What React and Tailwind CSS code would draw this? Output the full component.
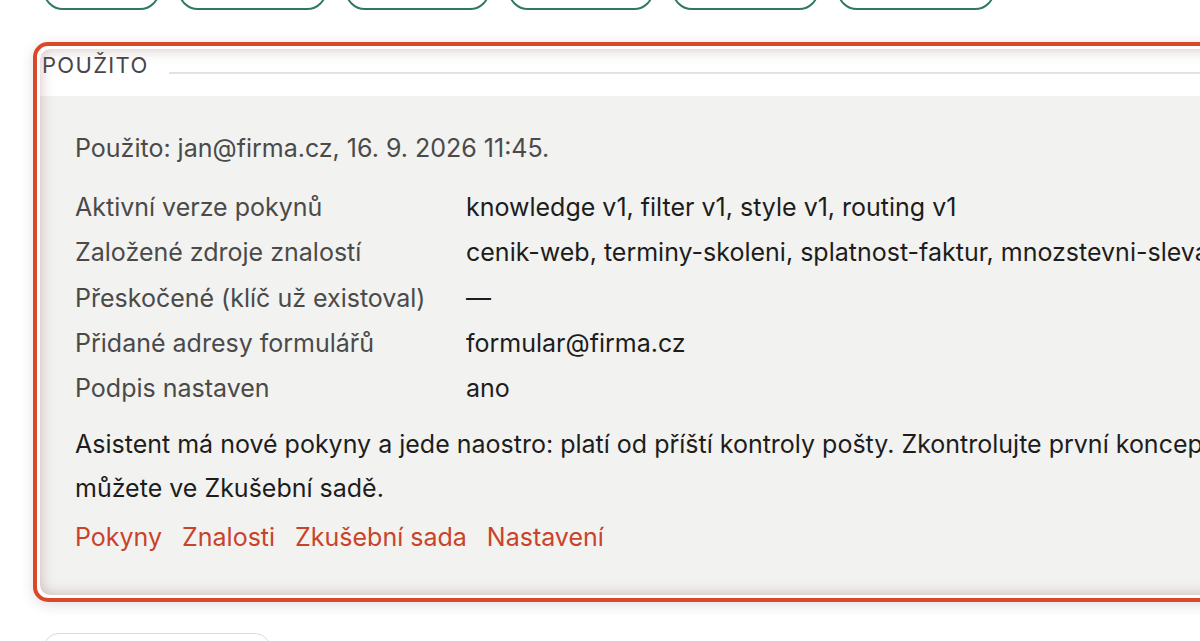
import React from "react"

const pills = [117, 149, 145, 146, 147, 158]

const rows = [
  ["Aktivní verze pokynů", "knowledge v1, filter v1, style v1, routing v1"],
  ["Založené zdroje znalostí", "cenik-web, terminy-skoleni, splatnost-faktur, mnozstevni-sleva"],
  ["Přeskočené (klíč už existoval)", "—"],
  ["Přidané adresy formulářů", "formular@firma.cz"],
  ["Podpis nastaven", "ano"],
]

const links = ["Pokyny", "Znalosti", "Zkušební sada", "Nastavení"]

export default function App() {
  return (
    <div className="w-[1200px] h-[641px] overflow-hidden bg-white font-['Inter','Noto_Sans',sans-serif]">
      {/* top tabs, cut off by the viewport */}
      <div className="flex gap-[18px] pl-[43px] -mt-[30px]">
        {pills.map((w, i) => (
          <div
            key={i}
            style={{ width: w }}
            className="h-[40px] rounded-full border-2 border-[#2f7a5c]"
          />
        ))}
      </div>

      <div className="mt-[32px] ml-[33px] w-[1240px] rounded-[15px] border-4 border-[#d9482b] p-[3px] bg-white shadow-[0_3px_14px_rgba(0,0,0,0.13)]">
        <div className="relative rounded-[10px] overflow-hidden bg-white">
          <div className="h-[47px] flex items-start pt-[3px]">
            <div className="pl-[2px] text-[22px] leading-[26px] tracking-[0.06em] text-[#48444c]">
              POUŽITO
            </div>
            <div className="flex-1 h-[2px] bg-[#e2e2e2] mt-[20px] ml-[20px]" />
          </div>

          <div className="bg-[#f2f2f0] pl-[35px] pt-[36px] pb-[42px] text-[25px]">
            <p className="leading-[32px] text-[#4a4a4a]">Použito: jan@firma.cz, 16. 9. 2026 11:45.</p>

            <div className="mt-[21px] grid grid-cols-[391px_1fr] leading-[45.25px] whitespace-nowrap">
              {rows.map(([k, v]) => (
                <React.Fragment key={k}>
                  <div className="text-[#4a4a4a]">{k}</div>
                  <div className="text-[#1d1d1d]">{v}</div>
                </React.Fragment>
              ))}
            </div>

            <p className="mt-[11px] leading-[44px] text-[#1d1d1d] whitespace-nowrap">
              Asistent má nové pokyny a jede naostro: platí od příští kontroly pošty. Zkontrolujte první koncepty; odpovědi vyzkoušet
              <br />
              můžete ve Zkušební sadě.
            </p>

            <div className="mt-[11px] flex gap-[20px] leading-[32px] text-[#c9432b]">
              {links.map((l) => (
                <a key={l} href="#">{l}</a>
              ))}
            </div>
          </div>

          <div className="pointer-events-none absolute inset-0 rounded-[10px] shadow-[inset_0_0_14px_rgba(150,95,95,0.42)]" />
        </div>
      </div>

      <div className="mt-[31px] ml-[43px] w-[228px] h-[40px] rounded-[16px] border border-[#dcdcdc]" />
    </div>
  )
}
